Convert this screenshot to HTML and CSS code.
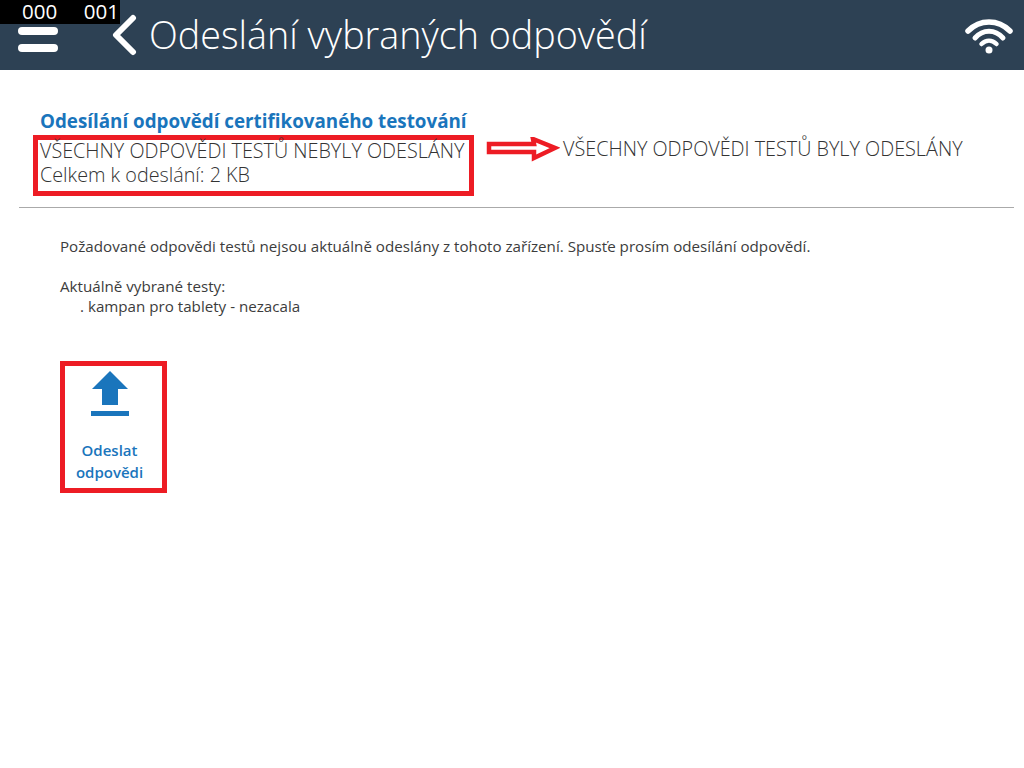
FILE: index.html
```html
<!DOCTYPE html>
<html lang="cs">
<head>
  <meta charset="UTF-8">
  <title>Odeslání vybraných odpovědí</title>
  <link rel="stylesheet" href="styles.css">
</head>
<body>
  <header class="top-bar">
    <div class="counter"><span>000</span><span>001</span></div>
    <div class="menu-icon"><span></span><span></span></div>
    <svg class="back-icon" width="28" height="42" viewBox="0 0 28 42">
      <path d="M23 4 L6 21 L23 38" fill="none" stroke="#fff" stroke-width="6" stroke-linecap="round" stroke-linejoin="round"/>
    </svg>
    <h1>Odeslání vybraných odpovědí</h1>
    <svg class="wifi-icon" width="50" height="40" viewBox="0 0 50 40">
      <g fill="none" stroke="#fff" stroke-linecap="round">
        <path d="M4 16 C16 4 34 4 46 16" stroke-width="5.5"/>
        <path d="M11 23 C19 14 31 14 39 23" stroke-width="5"/>
        <path d="M17.500 29 C22 24.500 28 24.500 32.500 29" stroke-width="4.500"/>
      </g>
      <circle cx="25" cy="35" r="3.500" fill="#fff"/>
    </svg>
  </header>

  <main>
    <section class="status">
      <h2>Odesílání odpovědí certifikovaného testování</h2>
      <div class="status-row">
        <div class="status-box">
          <p>VŠECHNY ODPOVĚDI TESTŮ NEBYLY ODESLÁNY</p>
          <p>Celkem k odeslání: 2 KB</p>
        </div>
        <svg class="arrow" width="74" height="26" viewBox="0 0 74 26">
          <path d="M3 7 H48 L47 2 L69 11 L48 21 L48 15 H3 Z" fill="#fff" stroke="#ed1c24" stroke-width="4.500"/>
        </svg>
        <p class="status-after">VŠECHNY ODPOVĚDI TESTŮ BYLY ODESLÁNY</p>
      </div>
    </section>

    <section class="info">
      <p>Požadované odpovědi testů nejsou aktuálně odeslány z tohoto zařízení. Spusťe prosím odesílání odpovědí.</p>
      <p class="selected-label">Aktuálně vybrané testy:</p>
      <p class="selected-item">. kampan pro tablety - nezacala</p>
    </section>

    <button class="send-btn" type="button">
      <svg width="40" height="46" viewBox="0 0 40 46">
        <path d="M20 0 L38 18 H28 V34 H12 V18 H2 Z" fill="#1a75bc"/>
        <rect x="1" y="40" width="38" height="5" fill="#1a75bc"/>
      </svg>
      <span>Odeslat odpovědi</span>
    </button>
  </main>
</body>
</html>
```

FILE: styles.css
```css
body {
  margin: 0;
  font-family: 'Open Sans', 'Noto Sans', sans-serif;
  background: #fff;
  color: #3c3c3c;
}
p {
  margin: 0;
}
.top-bar {
  position: relative;
  display: flex;
  align-items: center;
  height: 70px;
  padding: 0 10px 0 18px;
  box-sizing: border-box;
  background: #2d4154;
}
.counter {
  position: absolute;
  top: 0;
  left: 0;
  width: 120px;
  height: 24px;
  padding: 0 1px 0 22px;
  box-sizing: border-box;
  display: flex;
  justify-content: space-between;
  background: #000;
  color: #fff;
  font-size: 20.5px;
  line-height: 23px;
}
.menu-icon {
  display: flex;
  flex-direction: column;
  gap: 9px;
  width: 40px;
  margin-top: 8px;
}
.menu-icon span {
  height: 8px;
  border-radius: 4px;
  background: #fff;
}
.back-icon {
  margin-left: 52px;
}
.top-bar h1 {
  flex: 1;
  margin: 0 0 2px 11px;
  color: #fff;
  font-size: 37.7px;
  font-weight: 300;
  white-space: nowrap;
}
.status {
  margin: 0 10px 0 19px;
  padding: 38px 0 11px 21px;
  border-bottom: 1px solid #aaa;
}
.status h2 {
  margin: 0;
  color: #1a75bc;
  font-size: 18.8px;
  font-weight: 700;
  line-height: 26px;
}
.status-row {
  display: flex;
  align-items: flex-start;
  margin-top: 1px;
}
.status-box {
  margin-left: -7px;
  width: 441px;
  height: 61px;
  padding: 0 0 0 7px;
  box-sizing: border-box;
  border: 5px solid #ed1c24;
  color: #333;
  font-size: 19.77px;
  font-weight: 300;
  line-height: 24px;
  white-space: nowrap;
}
.status-box p {
  margin-left: -5px;
}
.status-box p:first-child {
  margin-top: -1px;
}
.arrow {
  margin: 2px 0 0 12px;
}
.status-after {
  margin: 1px 0 0 3px;
  color: #333;
  font-size: 19.8px;
  font-weight: 300;
  line-height: 26px;
  white-space: nowrap;
}
.info {
  padding: 28px 0 0 60px;
  font-size: 15.17px;
  line-height: 20px;
}
.selected-label {
  margin-top: 20px;
}
.selected-item {
  padding-left: 20px;
}
.send-btn {
  display: flex;
  flex-direction: column;
  align-items: center;
  width: 107px;
  height: 132px;
  margin: 45px 0 0 60px;
  padding: 5px 8px 0 0;
  box-sizing: border-box;
  border: 5px solid #ed1c24;
  background: #fff;
  font-family: inherit;
}
.send-btn span {
  margin-top: 22px;
  color: #1a75bc;
  font-size: 15px;
  font-weight: 600;
  line-height: 22px;
}
```
